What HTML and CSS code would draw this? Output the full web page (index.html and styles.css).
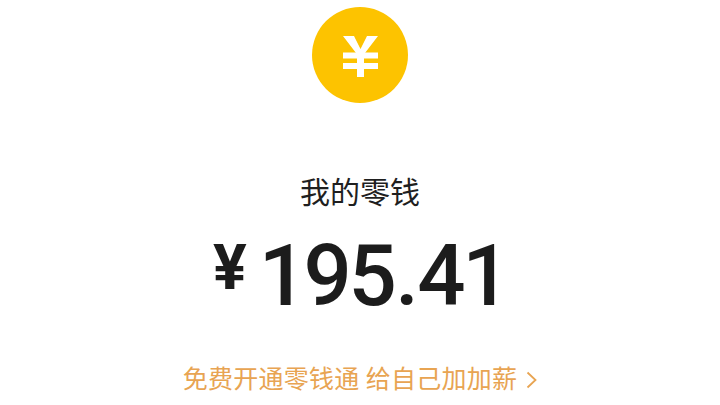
FILE: index.html
```html
<!DOCTYPE html>
<html lang="zh-CN">
<head>
    <meta charset="UTF-8">
    <meta name="viewport" content="width=device-width, initial-scale=1.0">
    <title>我的零钱</title>
    <link rel="stylesheet" href="styles.css">
</head>
<body>
    <div class="wallet">
        <div class="coin">
            <svg class="coin-icon" width="35" height="41" viewBox="0 0 35 41">
                <path fill="#fff" d="M0 0 H11 L17.5 13 L24 0 H35 L22 17 H13 Z"/>
                <path fill="#fff" d="M0 16.5 H35 V22.5 H0 Z M0 27 H35 V33 H0 Z M14 15 H21 V41 H14 Z"/>
            </svg>
        </div>
        <h1 class="title">我的零钱</h1>
        <div class="amount">
            <span class="currency">¥</span>
            <span class="value">195<span class="dot">.</span>41</span>
        </div>
        <div class="promo">
            <span class="promo-text">免费开通零钱通 给自己加加薪</span>
            <svg class="chevron" width="11" height="18" viewBox="0 0 11 18">
                <path d="M1.5 1.5 L9.5 9 L1.5 16.5" fill="none" stroke="#e8a452" stroke-width="1.8"/>
            </svg>
        </div>
    </div>
</body>
</html>
```

FILE: styles.css
```css
* {
    margin: 0;
    padding: 0;
    box-sizing: border-box;
}

body {
    font-family: Roboto, "Noto Sans CJK SC", sans-serif;
    background: #fff;
    width: 720px;
    height: 405px;
    overflow: hidden;
}

.wallet {
    display: flex;
    flex-direction: column;
    align-items: center;
    padding-top: 7px;
}

.coin {
    width: 96px;
    height: 96px;
    border-radius: 50%;
    background: #fdc300;
    display: flex;
    justify-content: center;
    align-items: center;
}

.coin-icon {
    margin-top: 3px;
}

.title {
    margin-top: 70px;
    font-size: 30px;
    line-height: 40px;
    font-weight: 400;
    color: #1f1f1f;
}

.amount {
    display: flex;
    align-items: center;
    gap: 12px;
    margin-top: 23px;
    color: #1c1c1c;
    height: 80px;
}

.currency {
    font-size: 63px;
    line-height: 60px;
    font-weight: 700;
    margin-top: -17px;
}

.value {
    font-size: 85px;
    line-height: 80px;
    font-weight: 500;
    letter-spacing: -3.5px;
}

.dot {
    margin: 0 2px;
}

.promo {
    display: flex;
    align-items: center;
    gap: 9px;
    margin-top: 47px;
    font-size: 25px;
    line-height: 34px;
    color: #e8a452;
}

.promo-text {
    letter-spacing: 0.25px;
}
```
